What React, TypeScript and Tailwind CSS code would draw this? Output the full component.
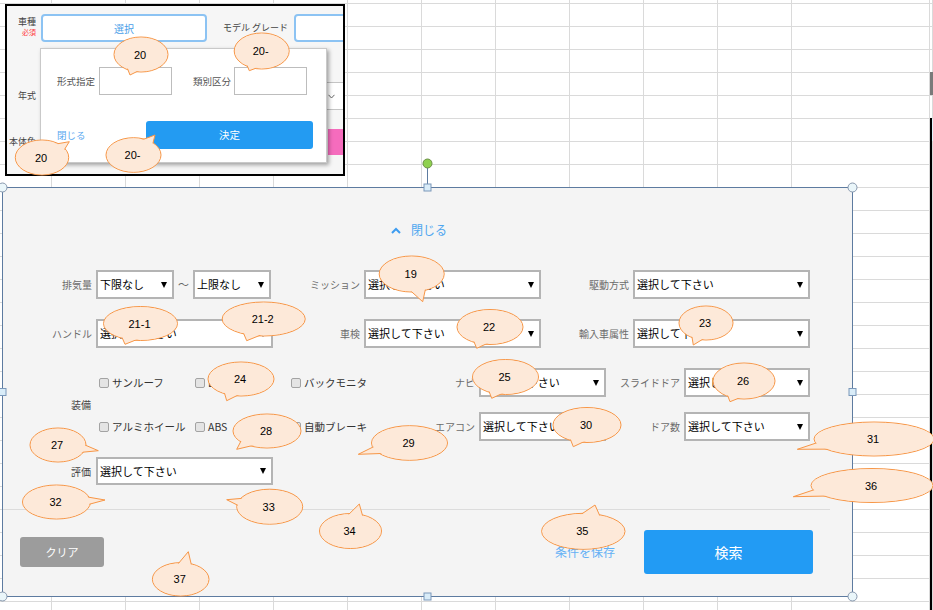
import React from 'react';

type Bubble = { label: string; cx: number; cy: number; rx: number; ry: number; tx: number; ty: number };

// callout balloons pasted over the sheet
const bubbles: Bubble[] = [
    { label: '20', cx: 141, cy: 54.5, rx: 27, ry: 17.5, tx: 130, ty: 75 },
    { label: '20-', cx: 261.7, cy: 51, rx: 27.5, ry: 18, tx: 249.3, ty: 70.7 },
    { label: '20', cx: 42, cy: 157.5, rx: 26.7, ry: 17.5, tx: 69.3, ty: 141.7 },
    { label: '20-', cx: 133.5, cy: 155, rx: 27.5, ry: 17.3, tx: 155, ty: 135 },
    { label: '19', cx: 411.7, cy: 274, rx: 32.5, ry: 18, tx: 422.7, ty: 301.7 },
    { label: '21-1', cx: 140.5, cy: 323.5, rx: 37, ry: 17, tx: 125, ty: 344.3 },
    { label: '21-2', cx: 263.7, cy: 319, rx: 41.5, ry: 17, tx: 246.7, ty: 340.7 },
    { label: '22', cx: 490, cy: 327, rx: 33, ry: 17.5, tx: 476.7, ty: 348.3 },
    { label: '23', cx: 706, cy: 323, rx: 27, ry: 17, tx: 693.3, ty: 345 },
    { label: '24', cx: 241, cy: 379, rx: 33, ry: 17, tx: 226.7, ty: 400.7 },
    { label: '25', cx: 505.5, cy: 377, rx: 33, ry: 17.5, tx: 491.7, ty: 398.3 },
    { label: '26', cx: 744, cy: 381, rx: 31, ry: 18, tx: 730, ty: 401.7 },
    { label: '27', cx: 58, cy: 445, rx: 28, ry: 17, tx: 98.3, ty: 450.7 },
    { label: '28', cx: 267, cy: 431, rx: 34, ry: 17, tx: 236.7, ty: 449.3 },
    { label: '29', cx: 409.5, cy: 443, rx: 38, ry: 17.3, tx: 358.3, ty: 454.3 },
    { label: '30', cx: 587, cy: 425, rx: 34, ry: 17.5, tx: 573.3, ty: 446.7 },
    { label: '31', cx: 874, cy: 439, rx: 60, ry: 17, tx: 797.3, ty: 449.3 },
    { label: '32', cx: 56.5, cy: 502, rx: 34, ry: 17, tx: 105, ty: 500 },
    { label: '33', cx: 269.7, cy: 506.7, rx: 33, ry: 17.5, tx: 226.7, ty: 499.7 },
    { label: '34', cx: 350.5, cy: 531, rx: 31, ry: 17.5, tx: 359.3, ty: 504 },
    { label: '35', cx: 583.3, cy: 531.3, rx: 41.7, ry: 18, tx: 595, ty: 505 },
    { label: '36', cx: 872, cy: 485.5, rx: 61, ry: 17, tx: 793.3, ty: 496.7 },
    { label: '37', cx: 180.7, cy: 579.3, rx: 28.3, ry: 16.7, tx: 188.3, ty: 551.7 },
];

const tail = (b: Bubble) => {
    const th = Math.atan2((b.ty - b.cy) / b.ry, (b.tx - b.cx) / b.rx);
    const p = (a: number) => `${b.cx + b.rx * 0.9 * Math.cos(a)},${b.cy + b.ry * 0.9 * Math.sin(a)}`;
    return `${p(th - 0.28)} ${b.tx},${b.ty} ${p(th + 0.28)}`;
};

const Label = ({ children, dark }: { children: React.ReactNode; dark?: boolean }) => (
    <div className={dark ? 'flex items-center justify-end pr-[5px] text-[10px] text-[#444]' : 'flex items-center justify-end pr-[4px] text-[10px] text-[#6b6b6b]'}>
        {children}
    </div>
);

const Select = ({ text = '選択して下さい' }: { text?: string }) => (
    <div className="flex h-full items-center justify-between border-2 border-[#b4b4b4] bg-white pl-[2px] pr-[5px]">
        <span className="whitespace-nowrap text-[11px] leading-none text-black">{text}</span>
        <span className="h-0 w-0 border-x-[3px] border-t-[6px] border-x-transparent border-t-black"></span>
    </div>
);

const Check = ({ label }: { label: string }) => (
    <div className="flex items-center gap-[3px] pl-[3px] text-[10.5px] text-[#333]">
        <span className="h-[10px] w-[10px] rounded-[2px] border border-[#a3a3a3] bg-[#e4e4e4]"></span>
        {label}
    </div>
);

export default function App() {
    return (
        <div className="relative h-[610px] w-[933px] overflow-hidden bg-white font-['Noto_Sans_CJK_JP',sans-serif]">
            {/* sheet grid */}
            <div className="grid h-[625px] grid-cols-[52px_repeat(10,74px)_138px_1fr] grid-rows-[4px_repeat(27,23px)]">
                {Array.from({ length: 13 * 28 }).map((_, i) => (
                    <div key={i} className="border-b border-r border-[#dadada]"></div>
                ))}
            </div>

            {/* edge of the next picture */}
            <div className="absolute left-[930px] top-[72px] h-[23px] w-[3px] bg-[#7a7a7a]"></div>
            <div className="absolute left-[930px] top-[118px] h-[492px] w-[2px] bg-black"></div>
            <div className="absolute left-[932px] top-[119px] h-[22px] w-px bg-[#dff3fb]"></div>

            {/* pasted screenshot: model dialog */}
            <div className="absolute left-[5px] top-[4px] h-[172px] w-[340px] overflow-hidden border-2 border-black bg-[#f6f6f6]">
                <div className="flex flex-col pt-[8px] text-[#444]">
                    <div className="flex h-[28px] items-center">
                        <div className="flex w-[29px] shrink-0 flex-col items-end pb-[4px] leading-none">
                            <span className="text-[9px]">車種</span>
                            <span className="mt-[3px] text-[7px] text-[#ff3b3b]">必須</span>
                        </div>
                        <div className="ml-[5px] flex h-full w-[166px] shrink-0 items-center justify-center rounded-[4px] border-2 border-[#8cc3f3] bg-white text-[10px] text-[#4a9ee8]">
                            選択
                        </div>
                        <div className="ml-[16px] w-[66px] shrink-0 whitespace-nowrap text-[9px]">モデル グレード</div>
                        <div className="ml-[5px] h-full w-[80px] shrink-0 rounded-[4px] border-2 border-[#8cc3f3] bg-white"></div>
                    </div>
                    <div className="mt-[40px] flex h-[28px] items-center">
                        <div className="w-[29px] shrink-0 text-right text-[9px]">年式</div>
                        <div className="ml-[5px] flex h-full w-[310px] shrink-0 items-center justify-end border border-[#c4c4c4] bg-white pr-[15px]">
                            <svg width="7" height="5" viewBox="0 0 7 5">
                                <polyline points="0.5,0.8 3.5,4 6.5,0.8" fill="none" stroke="#666" strokeWidth="1" />
                            </svg>
                        </div>
                    </div>
                    <div className="mt-[19px] flex h-[26px] items-center">
                        <div className="w-[29px] shrink-0 whitespace-nowrap text-right text-[9px]">本体色</div>
                        <div className="ml-auto h-full w-[15px] bg-[#f56cbd]"></div>
                    </div>
                </div>

                <div className="absolute left-[33px] top-[42px] w-[287px] border border-[#c9c9c9] bg-white pb-[13px] pl-[16px] pt-[18px] shadow-[2px_2px_4px_rgba(0,0,0,0.35)]">
                    <div className="flex h-[28px] items-center text-[9.5px] text-[#555]">
                        <span className="w-[39px] shrink-0 whitespace-nowrap">形式指定</span>
                        <div className="ml-[3px] h-full w-[73px] shrink-0 border border-[#bdbdbd] bg-white"></div>
                        <span className="ml-[21px] w-[39px] shrink-0 whitespace-nowrap">類別区分</span>
                        <div className="ml-[2px] h-full w-[73px] shrink-0 border border-[#bdbdbd] bg-white"></div>
                    </div>
                    <div className="mt-[26px] flex h-[28px] items-center">
                        <span className="w-[89px] shrink-0 text-[9.5px] text-[#5aa9ef]">閉じる</span>
                        <div className="flex h-full w-[167px] shrink-0 items-center justify-center rounded-[3px] bg-[#239bf2] text-[10.5px] text-white">
                            決定
                        </div>
                    </div>
                </div>
            </div>

            {/* pasted screenshot: detail search panel */}
            <div className="absolute left-[2px] top-[187px] flex h-[410px] w-[851px] flex-col border border-[#5d7ba0] bg-[#f4f4f4]">
                <div className="mt-[32px] flex h-[20px] items-center justify-center gap-[10px] pr-[17px] text-[12px] text-[#4ea6f0]">
                    <svg width="10" height="7" viewBox="0 0 10 7">
                        <polyline points="1,6 5,2 9,6" fill="none" stroke="#3d9cf0" strokeWidth="2" />
                    </svg>
                    <span>閉じる</span>
                </div>

                <div className="mt-[30px] grid grid-cols-[93px_177px_91px_177px_92px_177px] grid-rows-[29px_29px] gap-y-[20px]">
                    <Label>排気量</Label>
                    <div className="flex">
                        <div className="w-[78px]"><Select text="下限なし" /></div>
                        <div className="flex w-[19px] items-center justify-center text-[11px] text-[#666]">～</div>
                        <div className="w-[78px]"><Select text="上限なし" /></div>
                    </div>
                    <Label>ミッション</Label>
                    <Select />
                    <Label>駆動方式</Label>
                    <Select />

                    <Label>ハンドル</Label>
                    <Select />
                    <Label>車検</Label>
                    <Select />
                    <Label>輸入車属性</Label>
                    <Select />
                </div>

                <div className="mt-[20px] grid grid-cols-[93px_96px_96px_96px_95px_127px_78px_126px] grid-rows-[29px_29px] gap-y-[15px]">
                    <div className="row-span-2 flex items-center justify-end pr-[5px] text-[10px] text-[#444]">装備</div>
                    <Check label="サンルーフ" />
                    <Check label="ETC" />
                    <Check label="バックモニタ" />
                    <Label>ナビ</Label>
                    <Select />
                    <Label>スライドドア</Label>
                    <Select />

                    <Check label="アルミホイール" />
                    <Check label="ABS" />
                    <Check label="自動ブレーキ" />
                    <Label>エアコン</Label>
                    <Select />
                    <Label>ドア数</Label>
                    <Select />
                </div>

                <div className="mt-[16px] grid h-[28px] grid-cols-[93px_177px]">
                    <Label dark>評価</Label>
                    <Select />
                </div>

                <div className="mt-[24px] h-px w-[827px] bg-[#dcdcdc]"></div>

                <div className="mt-[20px] flex h-[44px] items-center">
                    <div className="ml-[17px] flex h-[30px] w-[84px] items-center justify-center rounded-[3px] bg-[#9c9c9c] text-[11px] text-white">
                        クリア
                    </div>
                    <span className="ml-auto text-[12px] text-[#63b0f4]">条件を保存</span>
                    <div className="ml-[29px] mr-[39px] flex h-full w-[169px] items-center justify-center rounded-[3px] bg-[#229bf4] text-[14px] text-white">
                        検索
                    </div>
                </div>
            </div>

            {/* selection handles + callouts */}
            <svg className="pointer-events-none absolute left-0 top-0" width="933" height="610">
                <line x1="427.5" y1="168" x2="427.5" y2="184" stroke="#5d7ba0" />
                <circle cx="427.5" cy="163.5" r="4.5" fill="#8fd14f" stroke="#6b8e47" />
                {[[2.5, 187.5], [852.5, 187.5], [2.5, 596.5], [852.5, 596.5]].map(([x, y], i) => (
                    <circle key={i} cx={x} cy={y} r="4.5" fill="#eaf6fa" stroke="#8797ad" />
                ))}
                {[[427.5, 187.5], [2.5, 392], [852.5, 392], [427.5, 596.5]].map(([x, y], i) => (
                    <rect key={i} x={x - 3.5} y={y - 3.5} width="7" height="7" fill="#d9ecf8" stroke="#7b98ba" />
                ))}

                {bubbles.map((b, i) => (
                    <g key={i}>
                        <ellipse cx={b.cx} cy={b.cy} rx={b.rx} ry={b.ry} fill="#fde9d9" stroke="#f79646" />
                        <polygon points={tail(b)} fill="#fde9d9" />
                        <polyline points={tail(b)} fill="none" stroke="#f79646" />
                        <ellipse cx={b.cx} cy={b.cy} rx={b.rx - 0.8} ry={b.ry - 0.8} fill="#fde9d9" />
                        <text
                            x={b.cx - 1}
                            y={b.cy}
                            textAnchor="middle"
                            dominantBaseline="central"
                            fontSize="11"
                            fontFamily="'Liberation Sans', Arial, sans-serif"
                            fill="#000"
                        >
                            {b.label}
                        </text>
                    </g>
                ))}
            </svg>
        </div>
    );
}
